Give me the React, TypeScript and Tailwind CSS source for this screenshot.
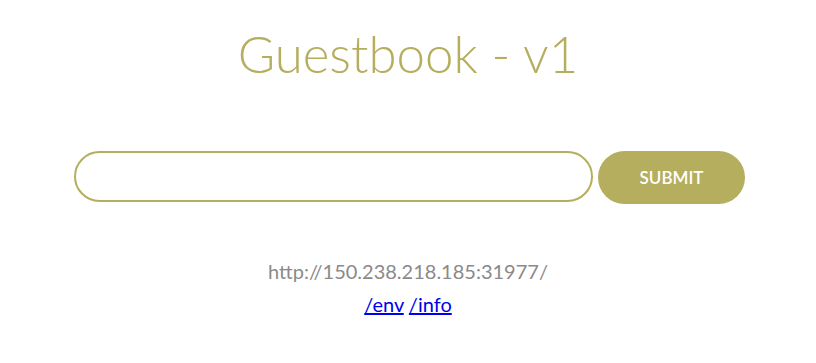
import React from 'react'

const font = { fontFamily: 'Lato, "Open Sans", sans-serif' }

function App() {
  return (
    <div className="min-h-screen bg-white flex flex-col items-center" style={font}>
      <h1 className="mt-[22px] text-[51px] leading-[64px] text-[#b5ae5e] font-light">
        Guestbook - v1
      </h1>
      <form className="mt-[65px] ml-[3px] flex items-start gap-[5px]">
        <input
          type="text"
          className="w-[519px] h-[51px] rounded-full border-2 border-[#b5ae5e] bg-white px-5 outline-none"
        />
        <button
          type="button"
          className="w-[147px] h-[53px] rounded-full bg-[#b5ae5e] text-white text-[17px] font-semibold"
        >
          SUBMIT
        </button>
      </form>
      <div className="mt-[55px] text-[20px] leading-[24px] text-[#8a8a8a]">
        http://150.238.218.185:31977/
      </div>
      <div className="mt-[9px] text-[20px] leading-[24px]">
        <a href="#" className="text-[#0000ee] underline">/env</a>{' '}
        <a href="#" className="text-[#0000ee] underline">/info</a>
      </div>
    </div>
  )
}

export default App
